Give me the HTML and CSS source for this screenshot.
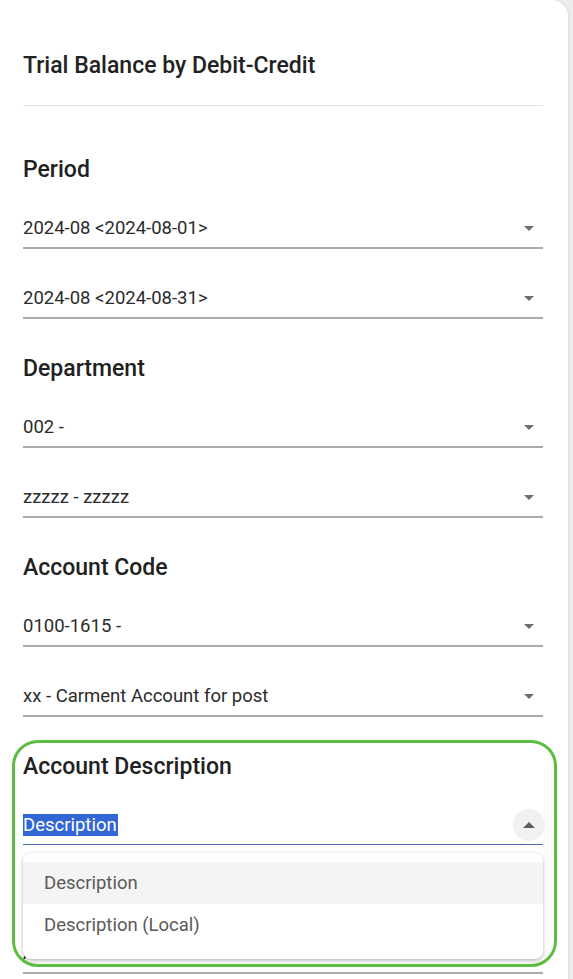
FILE: index.html
```html
<!DOCTYPE html>
<html lang="en">
<head>
<meta charset="utf-8">
<title>Trial Balance by Debit-Credit</title>
<link rel="stylesheet" href="styles.css">
</head>
<body>
<div class="page">
  <div class="card">
    <header class="card-header">
      <h1 class="title">Trial Balance by Debit-Credit</h1>
    </header>

    <section class="group">
      <h2 class="group-title">Period</h2>
      <div class="field"><span class="value">2024-08 &lt;2024-08-01&gt;</span><span class="caret"></span></div>
      <div class="field"><span class="value">2024-08 &lt;2024-08-31&gt;</span><span class="caret"></span></div>
    </section>

    <section class="group">
      <h2 class="group-title">Department</h2>
      <div class="field"><span class="value">002 -</span><span class="caret"></span></div>
      <div class="field"><span class="value">zzzzz - zzzzz</span><span class="caret"></span></div>
    </section>

    <section class="group">
      <h2 class="group-title">Account Code</h2>
      <div class="field"><span class="value">0100-1615 -</span><span class="caret"></span></div>
      <div class="field"><span class="value">xx - Carment Account for post</span><span class="caret"></span></div>
    </section>

    <section class="group group-focus">
      <h2 class="group-title">Account Description</h2>
      <div class="field field-open">
        <span class="value"><span class="selected">Description</span></span>
        <span class="toggle"><span class="caret-up"></span></span>
        <ul class="menu">
          <li class="menu-item menu-item-active">Description</li>
          <li class="menu-item">Description (Local)</li>
        </ul>
      </div>
      <div class="highlight-ring"></div>
    </section>

    <section class="group group-hidden">
      <div class="field"><span class="value">All</span><span class="caret"></span></div>
    </section>
  </div>
</div>
</body>
</html>
```
FILE: styles.css
```css
html, body {
  margin: 0;
  padding: 0;
}
body {
  background: #ededed;
  font-family: Roboto, "Liberation Sans", Arial, sans-serif;
  color: #212121;
  overflow: hidden;
}
.page {
  height: 979px;
  overflow: hidden;
}
.card {
  box-sizing: border-box;
  width: 568px;
  min-height: 1100px;
  background: #ffffff;
  border-top-right-radius: 16px;
  padding: 0 25px 0 23px;
  box-shadow: 1px 0 3px rgba(0, 0, 0, 0.08);
}
.card-header {
  padding: 50px 0 23px;
  border-bottom: 1px solid #e2e2e2;
}
.title {
  margin: 0;
  font-size: 23px;
  font-weight: 500;
  line-height: 32px;
  color: #222222;
}
.group {
  position: relative;
  margin-top: 41px;
}
.card-header + .group {
  margin-top: 55px;
}
.group-hidden {
  margin-top: 59px;
}
.group-title {
  margin: 0;
  font-size: 23px;
  font-weight: 500;
  line-height: 18px;
  color: #212121;
}
.field {
  position: relative;
  display: flex;
  align-items: center;
  justify-content: space-between;
  padding: 37px 0 7px;
  border-bottom: 2px solid #acacac;
}
.value {
  font-size: 18.5px;
  line-height: 24px;
  color: #2b2b2b;
  white-space: nowrap;
}
.caret {
  width: 0;
  height: 0;
  margin-right: 9px;
  border-left: 5px solid transparent;
  border-right: 5px solid transparent;
  border-top: 5px solid #6e6e6e;
}
.field-open {
  border-bottom: 1.5px solid #4a6aaa;
}
.selected {
  background: #3166d4;
  color: #ffffff;
  padding: 0 1px 0 0;
}
.toggle {
  position: absolute;
  right: -2px;
  top: 33px;
  width: 32px;
  height: 32px;
  border-radius: 50%;
  background: #f1f1f1;
  display: flex;
  align-items: center;
  justify-content: center;
}
.caret-up {
  width: 0;
  height: 0;
  border-left: 6px solid transparent;
  border-right: 6px solid transparent;
  border-bottom: 6px solid #5f5f5f;
}
.menu {
  position: absolute;
  left: 0;
  right: 0;
  top: 77px;
  margin: 0;
  padding: 9px 0 13px;
  list-style: none;
  background: #ffffff;
  border-radius: 8px;
  box-shadow: 0 2px 4px rgba(0, 0, 0, 0.25), 0 0 2px rgba(0, 0, 0, 0.08);
  z-index: 5;
}
.menu-item {
  height: 42px;
  line-height: 42px;
  padding-left: 21px;
  font-size: 18.5px;
  color: #5a5a5a;
}
.menu-item-active {
  background: #f4f4f4;
}
.highlight-ring {
  position: absolute;
  left: -11px;
  right: -14px;
  top: -18px;
  height: 227px;
  border: 3px solid #5cbd40;
  border-radius: 26px;
  box-sizing: border-box;
  z-index: 6;
  pointer-events: none;
}
```
